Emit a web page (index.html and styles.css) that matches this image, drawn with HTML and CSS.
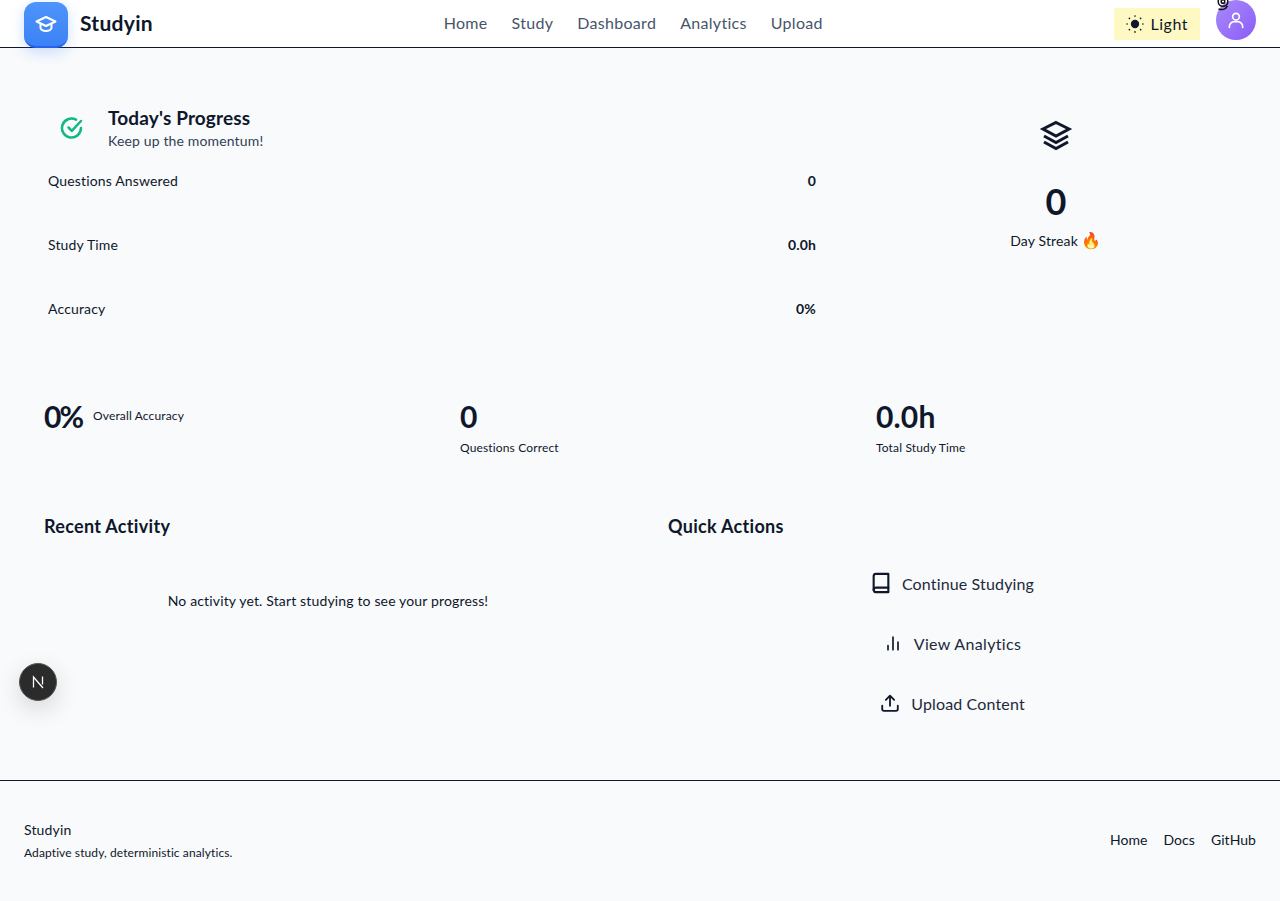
FILE: index.html
```html
<!DOCTYPE html>
<html lang="en">
<head>
<meta charset="utf-8">
<title>Studyin</title>
<link rel="stylesheet" href="styles.css">
</head>
<body>
<header class="topbar">
  <div class="brand">
    <span class="logo">
      <svg width="24" height="24" viewBox="0 0 24 24" fill="none" stroke="#fff" stroke-width="2" stroke-linecap="round" stroke-linejoin="round"><path d="M12 5 2.500 9.500 12 14l9.500-4.500z"/><path d="M6.500 12v4c0 1.500 2.500 3 5.500 3s5.500-1.500 5.500-3v-4"/></svg>
    </span>
    <span class="brand-name">Studyin</span>
  </div>
  <nav class="nav">
    <a>Home</a><a>Study</a><a>Dashboard</a><a>Analytics</a><a>Upload</a>
  </nav>
  <div class="top-actions">
    <button class="theme">
      <svg width="20" height="20" viewBox="0 0 24 24" fill="#0f172a" stroke="#0f172a" stroke-width="2" stroke-linecap="round"><circle cx="12" cy="12" r="4"/><path d="M12 2.500v.01M12 21.500v.01M2.500 12h.01M21.500 12h.01M5.300 5.300l.01.01M18.700 18.700l.01.01M5.300 18.700l.01-.01M18.700 5.300l.01-.01"/></svg>
      <span class="theme-label">Light</span>
    </button>
    <span class="avatar">
      <span class="avatar-mark">
        <svg width="14" height="14" viewBox="0 0 14 14" fill="none" stroke="#111" stroke-width="1.500"><circle cx="7" cy="1.500" r="4.800"/><circle cx="7" cy="1.500" r="1.800"/><path d="M2.500 8.800c3 1.500 7 1 9-3"/></svg>
      </span>
      <svg width="20" height="20" viewBox="0 0 24 24" fill="none" stroke="#fff" stroke-width="2" stroke-linecap="round"><circle cx="12" cy="8" r="4"/><path d="M4 21v-1a6 6 0 0 1 6-6h4a6 6 0 0 1 6 6v1"/></svg>
    </span>
  </div>
</header>

<main class="page">
  <section class="hero">
    <div class="progress">
      <div class="progress-head">
        <svg class="check" width="24" height="24" viewBox="0 0 24 24" fill="none" stroke="#10b981" stroke-width="2.500" stroke-linecap="round" stroke-linejoin="round"><path d="M21 12a9.500 9.500 0 1 1-5-8.300"/><path d="m8.500 11.500 3.300 3.300L21 5"/></svg>
        <div>
          <h2>Today's Progress</h2>
          <p>Keep up the momentum!</p>
        </div>
      </div>
      <div class="row"><span>Questions Answered</span><b>0</b></div>
      <div class="row"><span>Study Time</span><b>0.0h</b></div>
      <div class="row"><span>Accuracy</span><b>0%</b></div>
    </div>
    <div class="streak">
      <svg width="36" height="36" viewBox="0 0 36 36" fill="none" stroke="#0f172a" stroke-width="3" stroke-linejoin="miter"><path d="M18 4.500 31 11 18 18 5 11z"/><path d="M6 18l12 6.500L30 18"/><path d="M6 24l12 6.500L30 24"/></svg>
      <div class="streak-num">0</div>
      <div class="streak-label">Day Streak <span class="fire">🔥</span></div>
    </div>
  </section>

  <section class="stats">
    <div class="stat inline"><strong>0%</strong><small>Overall Accuracy</small></div>
    <div class="stat"><strong>0</strong><small>Questions Correct</small></div>
    <div class="stat"><strong>0.0h</strong><small>Total Study Time</small></div>
  </section>

  <section class="lower">
    <div>
      <h3>Recent Activity</h3>
      <p class="empty">No activity yet. Start studying to see your progress!</p>
    </div>
    <div>
      <h3>Quick Actions</h3>
      <div class="actions">
        <a class="action">
          <svg width="22" height="22" viewBox="0 0 24 24" fill="none" stroke="#0f172a" stroke-width="2.300" stroke-linecap="round" stroke-linejoin="round"><path d="M4 20V4.500A2.500 2.500 0 0 1 6.500 2H20v20H6.500A2.500 2.500 0 0 1 4 20z"/><path d="M4 19.500A2.500 2.500 0 0 1 6.500 17H20"/></svg>
          <span>Continue Studying</span>
        </a>
        <a class="action action-wide">
          <svg width="20" height="20" viewBox="0 0 24 24" fill="none" stroke="#0f172a" stroke-width="2" stroke-linecap="round"><path d="M6 15v5M12 5v15M18 11v9"/></svg>
          <span>View Analytics</span>
        </a>
        <a class="action">
          <svg width="22" height="22" viewBox="0 0 24 24" fill="none" stroke="#0f172a" stroke-width="2" stroke-linecap="round" stroke-linejoin="round"><path d="M12 15V4M7.500 8.500 12 4l4.500 4.500"/><path d="M3.500 15v3.500a2 2 0 0 0 2 2h13a2 2 0 0 0 2-2V15"/></svg>
          <span>Upload Content</span>
        </a>
      </div>
    </div>
  </section>
</main>

<button class="dev-badge" aria-label="Next.js dev tools">
  <svg width="16" height="16" viewBox="0 0 16 16" fill="none" stroke="#fff" stroke-width="1.300"><path d="M3.500 13.500V3L13 14M12.500 2.500v8"/></svg>
</button>

<footer class="footer">
  <div>
    <div class="foot-name">Studyin</div>
    <div class="foot-tag">Adaptive study, deterministic analytics.</div>
  </div>
  <div class="foot-links"><a>Home</a><a>Docs</a><a>GitHub</a></div>
</footer>
</body>
</html>
```
FILE: styles.css
```css
* { box-sizing: border-box; }
html, body { margin: 0; padding: 0; }
body {
  background: #f8fafc;
  color: #0f172a;
  font-family: "Lato", "Noto Sans", sans-serif;
  font-size: 14px;
  letter-spacing: .15px;
  height: 901px;
  overflow: hidden;
}
h2, h3, p { margin: 0; }
.topbar {
  height: 48px;
  padding: 0 24px;
  background: #fff;
  border-bottom: 1px solid #0f172a;
  display: flex;
  justify-content: space-between;
  align-items: center;
}
.brand { display: flex; align-items: center; gap: 12px; }
.logo {
  width: 44px;
  height: 46px;
  margin: 2px 0 -1px;
  border-radius: 12px;
  background: linear-gradient(180deg, #4f94fb, #3b82f6);
  border-bottom: 2px solid #2563eb;
  box-shadow: 0 4px 14px rgba(59, 130, 246, .25);
  display: flex;
  align-items: center;
  justify-content: center;
}
.brand-name { font-size: 21px; font-weight: 700; letter-spacing: .3px; margin-bottom: 2px; }
.nav { display: flex; gap: 24px; font-size: 16px; letter-spacing: .3px; color: #475569; margin-bottom: 2px; }
.top-actions { display: flex; align-self: flex-start; align-items: flex-start; gap: 16px; }
.theme {
  height: 32px;
  margin-top: 8px;
  padding: 0 12px 0 11px;
  background: #fef9c3;
  border: 0;
  display: flex;
  align-items: center;
  gap: 6px;
  color: #0f172a;
  font: inherit;
  font-size: 16px;
  letter-spacing: .5px;
}
.theme-label { margin-bottom: 2px; }
.avatar {
  position: relative;
  width: 40px;
  height: 40px;
  border-radius: 50%;
  background: linear-gradient(135deg, #a78bfa, #8b5cf6);
  display: flex;
  align-items: center;
  justify-content: center;
}
.avatar-mark { position: absolute; left: 0; top: 0; line-height: 0; }
.page { height: 732px; padding: 48px 36px 0 44px; }
.hero { display: grid; grid-template-columns: 776px 376px; gap: 48px; }
.progress { padding: 9px 4px 0; }
.progress-head { display: flex; align-items: center; gap: 24px; padding-left: 12px; margin-bottom: 12px; }
.check { flex: none; }
.progress-head h2 { font-size: 19px; font-weight: 700; line-height: 26px; letter-spacing: .15px; }
.progress-head p { font-size: 14px; line-height: 20px; color: #334155; }
.row {
  height: 64px;
  display: flex;
  justify-content: space-between;
  padding-top: 8px;
  line-height: 20px;
}
.row b { font-weight: 700; }
.streak { display: flex; flex-direction: column; align-items: center; padding-top: 22px; }
.streak-num { font-size: 36px; font-weight: 700; line-height: 40px; margin-top: 27px; }
.streak-label { margin-top: 10px; line-height: 20px; }
.fire { font-family: "Noto Color Emoji", sans-serif; font-size: 16px; }
.stats {
  display: grid;
  grid-template-columns: repeat(3, 368px);
  gap: 48px;
  margin-top: 43px;
}
.stat { display: flex; flex-direction: column; }
.stat strong { font-size: 30px; font-weight: 700; line-height: 36px; }
.stat small { font-size: 12px; line-height: 16px; margin-top: 6px; }
.stat.inline { flex-direction: row; gap: 11px; align-items: flex-start; }
.stat.inline strong { letter-spacing: -2px; }
.stat.inline small { margin-top: 10px; }
.lower { display: grid; grid-template-columns: 568px 568px; gap: 56px; margin-top: 56px; }
.lower h3 { font-size: 18px; font-weight: 700; line-height: 28px; letter-spacing: .3px; }
.empty { text-align: center; margin-top: 51px; line-height: 20px; }
.actions { display: flex; flex-direction: column; align-items: center; gap: 16px; margin-top: 21px; }
.action {
  height: 44px;
  display: flex;
  align-items: center;
  gap: 10px;
  font-size: 16px;
  color: #1e293b;
}
.action-wide { gap: 11px; letter-spacing: .35px; }
.dev-badge {
  position: fixed;
  left: 19px;
  top: 663px;
  width: 38px;
  height: 38px;
  border-radius: 50%;
  background: #2b2b2b;
  border: 1px solid #555;
  box-shadow: 0 8px 24px rgba(0, 0, 0, .15);
  padding: 0;
  display: flex;
  align-items: center;
  justify-content: center;
}
.footer {
  height: 121px;
  border-top: 1px solid #0f172a;
  padding: 0 24px 2px;
  display: flex;
  justify-content: space-between;
  align-items: center;
}
.foot-name { font-size: 14px; line-height: 20px; }
.foot-tag { font-size: 12px; line-height: 16px; margin-top: 5px; letter-spacing: .1px; }
.foot-links { display: flex; gap: 16px; font-size: 14px; margin-bottom: 2px; letter-spacing: .05px; }
```
